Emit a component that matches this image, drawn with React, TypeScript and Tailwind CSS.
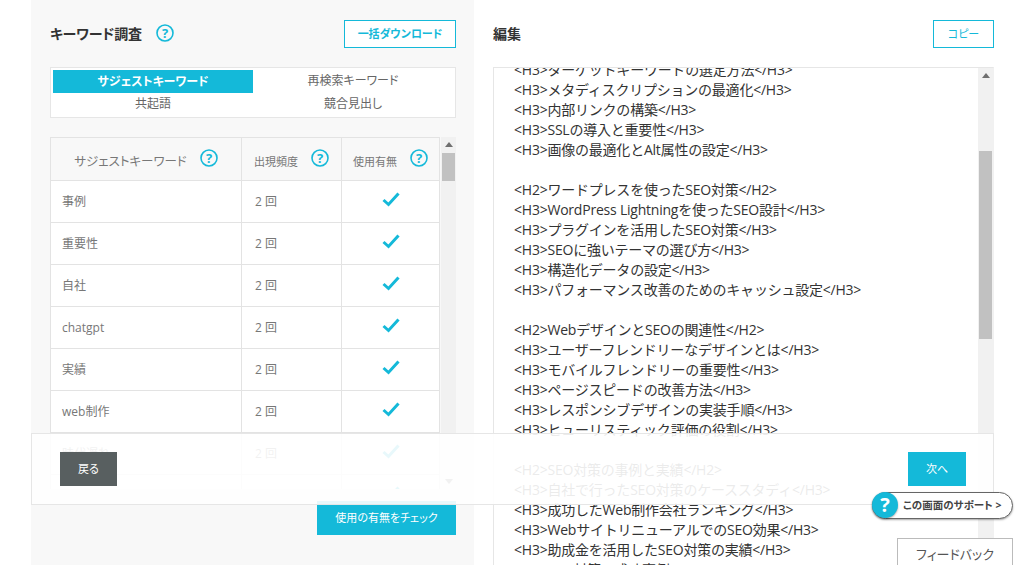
import React from "react";

const rows = ["事例", "重要性", "自社", "chatgpt", "実績", "web制作", "時代遅れ", "ホームページ制作"];

const lines = [
  "<H3>ターゲットキーワードの選定方法</H3>",
  "<H3>メタディスクリプションの最適化</H3>",
  "<H3>内部リンクの構築</H3>",
  "<H3>SSLの導入と重要性</H3>",
  "<H3>画像の最適化とAlt属性の設定</H3>",
  "",
  "<H2>ワードプレスを使ったSEO対策</H2>",
  "<H3>WordPress Lightningを使ったSEO設計</H3>",
  "<H3>プラグインを活用したSEO対策</H3>",
  "<H3>SEOに強いテーマの選び方</H3>",
  "<H3>構造化データの設定</H3>",
  "<H3>パフォーマンス改善のためのキャッシュ設定</H3>",
  "",
  "<H2>WebデザインとSEOの関連性</H2>",
  "<H3>ユーザーフレンドリーなデザインとは</H3>",
  "<H3>モバイルフレンドリーの重要性</H3>",
  "<H3>ページスピードの改善方法</H3>",
  "<H3>レスポンシブデザインの実装手順</H3>",
  "<H3>ヒューリスティック評価の役割</H3>",
  "",
  "<H2>SEO対策の事例と実績</H2>",
  "<H3>自社で行ったSEO対策のケーススタディ</H3>",
  "<H3>成功したWeb制作会社ランキング</H3>",
  "<H3>WebサイトリニューアルでのSEO効果</H3>",
  "<H3>助成金を活用したSEO対策の実績</H3>",
  "<H3>SEO対策の成功事例</H3>",
];

function Help() {
  return (
    <svg width="18" height="18" viewBox="0 0 18 18" className="shrink-0">
      <circle cx="9" cy="9" r="8" fill="none" stroke="#14b9d9" strokeWidth="1.6" />
      <text x="9" y="13.6" textAnchor="middle" fontSize="13" fontWeight="700" fill="#14b9d9" fontFamily="Open Sans">?</text>
    </svg>
  );
}

function Check() {
  return (
    <svg width="18" height="15" viewBox="0 0 18 15">
      <path d="M1.5 8 L6.5 12.5 L16.5 1.5" fill="none" stroke="#14b9d9" strokeWidth="3" />
    </svg>
  );
}

function Arrow({ up }: { up?: boolean }) {
  return (
    <svg width="8" height="5" viewBox="0 0 8 5" className={up ? "" : "rotate-180"}>
      <path d="M4 0 L8 5 L0 5 Z" fill="#6f6f6f" />
    </svg>
  );
}

export default function App() {
  return (
    <div className="font-['Open_Sans','Noto_Sans_CJK_JP',sans-serif] [font-feature-settings:'palt'] relative w-[1024px] h-[565px] overflow-hidden bg-white text-[#444]">
      <div className="flex h-full pl-[31px]">
        {/* left panel */}
        <div className="w-[443px] h-full bg-[#f8f8f8] pl-[19px] pr-[18px] pt-[20px] shrink-0">
          <div className="flex items-center justify-between h-[28px]">
            <div className="flex items-center gap-[14px] -mt-[3px]">
              <h2 className="text-[14px] font-bold text-[#333] mt-[1px] tracking-[-0.2px]">キーワード調査</h2>
              <Help />
            </div>
            <button className="w-[112px] h-[28px] bg-white border border-[#14b9d9] text-[11px] font-bold text-[#14b9d9]">
              一括ダウンロード
            </button>
          </div>

          <div className="mt-[19px] h-[51px] bg-white border border-[#e6e6e6] grid grid-cols-2 grid-rows-2 p-[2px] text-[12px] text-[#666] text-center items-center">
            <div className="h-[23px] leading-[23px] bg-[#14b9d9] text-white font-bold">サジェストキーワード</div>
            <div>再検索キーワード</div>
            <div>共起語</div>
            <div>競合見出し</div>
          </div>

          <div className="mt-[19px] h-[352px] flex overflow-hidden">
            <div className="w-[390px] shrink-0">
              <div className="flex h-[44px] bg-[#f8f8f8] border border-[#e3e3e3] text-[#777]">
                <div className="w-[191px] flex items-center justify-center gap-[13px] border-r border-[#e3e3e3] pb-[3px]">
                  <span className="text-[12.5px] mt-[9px]">サジェストキーワード</span>
                  <Help />
                </div>
                <div className="w-[100px] flex items-center justify-center gap-[13px] border-r border-[#e3e3e3] pb-[3px]">
                  <span className="text-[11px] mt-[9px]">出現頻度</span>
                  <Help />
                </div>
                <div className="flex-1 flex items-center justify-center gap-[13px] pb-[3px]">
                  <span className="text-[11px] mt-[9px]">使用有無</span>
                  <Help />
                </div>
              </div>
              {rows.map((r) => (
                <div key={r} className="flex h-[42px] bg-white border border-t-0 border-[#e3e3e3] text-[12px] text-[#777] items-stretch">
                  <div className="w-[191px] pl-[11px] flex items-center border-r border-[#e3e3e3]">{r}</div>
                  <div className="w-[100px] pl-[13px] flex items-center border-r border-[#e3e3e3]">2 回</div>
                  <div className="flex-1 flex items-center justify-center pb-[5px]">
                    <Check />
                  </div>
                </div>
              ))}
            </div>
            <div className="w-[15px] ml-[1px] h-full bg-[#f1f1f1] flex flex-col items-center justify-between pt-[5px] pb-[5px] relative">
              <Arrow up />
              <Arrow />
              <div className="absolute top-[16px] left-[1px] w-[13px] h-[28px] bg-[#c1c1c1]" />
            </div>
          </div>

          <div className="flex justify-end mt-[12px]">
            <button className="w-[139px] h-[34px] bg-[#14b9d9] text-white text-[11px]">使用の有無をチェック</button>
          </div>
        </div>

        {/* right panel */}
        <div className="w-[501px] ml-[19px] pt-[20px] shrink-0">
          <div className="flex items-center justify-between h-[28px]">
            <h2 className="text-[14px] font-bold text-[#333] -mt-[2px]">編集</h2>
            <button className="w-[61px] h-[28px] bg-white border border-[#14b9d9] text-[11px] text-[#14b9d9]">コピー</button>
          </div>
          <div className="mt-[19px] h-[520px] flex border border-[#e6e6e6] border-r-[#f1f1f1] overflow-hidden">
            <div className="flex-1 overflow-hidden pl-[20px]">
              <div className="-mt-[8px] text-[14px] leading-[20px] text-[#333] [font-feature-settings:normal] tracking-[-0.22px]">
                {lines.map((l, i) => (
                  <div key={i} className="h-[20px] whitespace-pre">{l}</div>
                ))}
              </div>
            </div>
            <div className="w-[15px] h-full bg-[#f1f1f1] flex flex-col items-center pt-[5px] relative">
              <Arrow up />
              <div className="absolute top-[83px] left-[1px] w-[13px] h-[188px] bg-[#c1c1c1]" />
            </div>
          </div>
        </div>
      </div>

      {/* fixed footer bar */}
      <div className="absolute left-[31px] top-[433px] w-[963px] h-[72px] bg-white/90 border border-[#e6e6e6] flex items-start justify-between pl-[28px] pr-[27px] pt-[18px]">
        <button className="w-[57px] h-[34px] bg-[#585f60] text-white text-[11px]">戻る</button>
        <button className="w-[58px] h-[34px] bg-[#14b9d9] text-white text-[11px]">次へ</button>
      </div>

      {/* support pill */}
      <div className="absolute left-[872px] top-[492px] w-[141px] h-[27px] bg-white border border-[#666] rounded-full shadow-[0_1px_2px_rgba(0,0,0,0.35)] flex items-center pl-[30px] text-[10.5px] font-bold text-[#444]">
        この画面のサポート &gt;
      </div>
      <div className="absolute left-[872px] top-[492px] w-[26px] h-[26px] rounded-full bg-[#14b9d9] shadow-[0_1px_2px_rgba(0,0,0,0.35)] flex items-center justify-center text-white text-[20px] font-bold leading-none">
        ?
      </div>

      {/* feedback tab */}
      <div className="absolute left-[897px] top-[538px] w-[116px] h-[40px] bg-white border border-[#bbb] pt-[6px] text-center text-[13px] text-[#555]">
        フィードバック
      </div>
    </div>
  );
}
